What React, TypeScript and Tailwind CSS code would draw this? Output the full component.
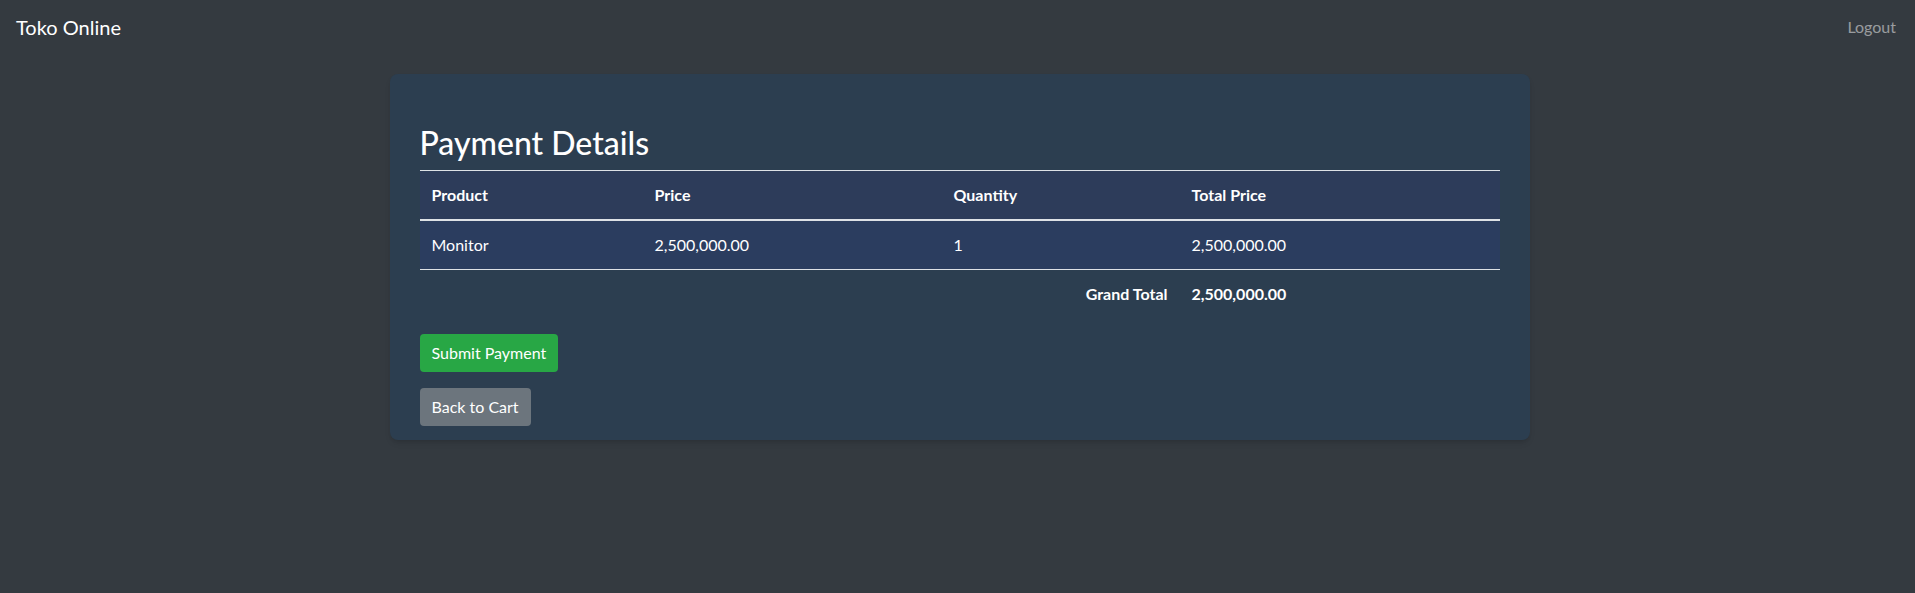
import { useState } from 'react';

interface OrderItem {
  product: string;
  price: number;
  quantity: number;
}

const items: OrderItem[] = [{ product: 'Monitor', price: 2500000, quantity: 1 }];

const fmt = (n: number) =>
  n.toLocaleString('en-US', { minimumFractionDigits: 2, maximumFractionDigits: 2 });

export default function App() {
  const [cart] = useState(items);
  const grandTotal = cart.reduce((sum, i) => sum + i.price * i.quantity, 0);

  return (
    <div
      className="min-h-[593px] bg-[#343a40] text-white"
      style={{ fontFamily: '"Segoe UI", Lato, "Noto Sans", sans-serif' }}
    >
      <nav className="flex h-[53px] items-center justify-between pl-4 pr-[19px]">
        <a className="text-[20px] leading-[30px] text-white">Toko Online</a>
        <a className="text-[16px] leading-6 text-white/50">Logout</a>
      </nav>

      <div className="mx-auto mt-[21px] w-[1140px] translate-x-[2px] rounded-lg bg-[#2c3e50] px-[30px] pb-[14px] pt-[50px] shadow-md">
        <h2 className="mb-2 text-[32px] font-medium leading-[38px]">Payment Details</h2>

        <table className="mb-4 w-full border-collapse text-[16px] leading-6">
          <thead>
            <tr className="bg-[#2d3c5a]">
              <th className="w-[223px] border-t border-b-2 border-[#dee2e6] px-3 py-3 text-left font-bold">Product</th>
              <th className="w-[299px] border-t border-b-2 border-[#dee2e6] px-3 py-3 text-left font-bold">Price</th>
              <th className="w-[238px] border-t border-b-2 border-[#dee2e6] px-3 py-3 text-left font-bold">Quantity</th>
              <th className="border-t border-b-2 border-[#dee2e6] px-3 py-3 text-left font-bold">Total Price</th>
            </tr>
          </thead>
          <tbody>
            {cart.map((item) => (
              <tr key={item.product} className="bg-[#2b3d5f]">
                <td className="px-3 py-3">{item.product}</td>
                <td className="px-3 py-3">{fmt(item.price)}</td>
                <td className="px-3 py-3">{item.quantity}</td>
                <td className="px-3 py-3">{fmt(item.price * item.quantity)}</td>
              </tr>
            ))}
          </tbody>
          <tfoot>
            <tr>
              <td colSpan={3} className="border-t border-[#dee2e6] px-3 py-3 text-right font-bold">Grand Total</td>
              <td className="border-t border-[#dee2e6] px-3 py-3 font-bold">{fmt(grandTotal)}</td>
            </tr>
          </tfoot>
        </table>

        <div className="flex flex-col items-start gap-4">
          <button className="h-[38px] rounded bg-[#28a745] px-3 text-[16px] text-white">Submit Payment</button>
          <button className="h-[38px] rounded bg-[#6c757d] px-3 text-[16px] text-white">Back to Cart</button>
        </div>
      </div>
    </div>
  );
}
